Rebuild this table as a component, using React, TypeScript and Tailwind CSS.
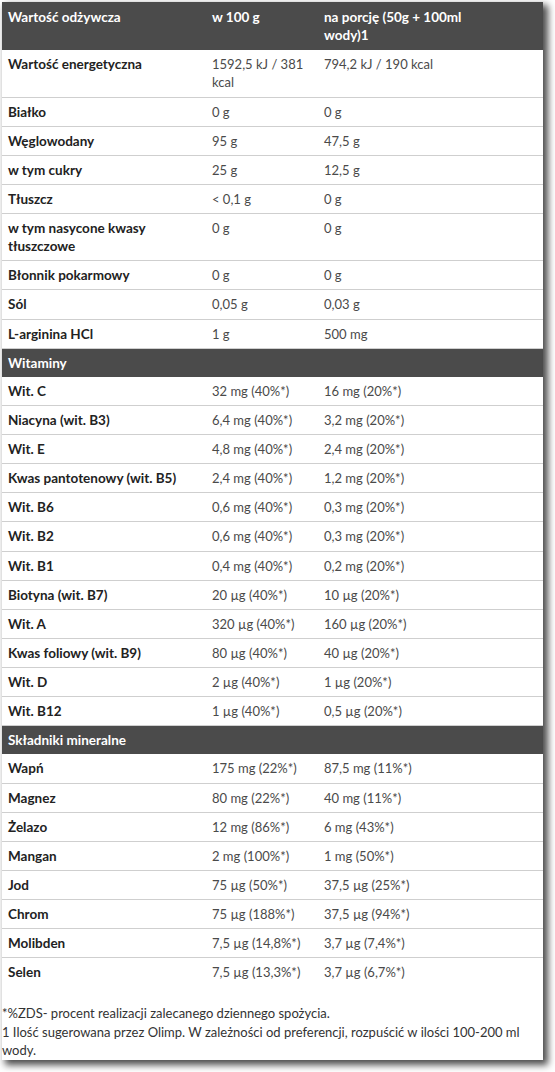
type Row = [string, string, string];

const basic: Row[] = [
  ["Wartość energetyczna", "1592,5 kJ / 381 kcal", "794,2 kJ / 190 kcal"],
  ["Białko", "0 g", "0 g"],
  ["Węglowodany", "95 g", "47,5 g"],
  ["w tym cukry", "25 g", "12,5 g"],
  ["Tłuszcz", "< 0,1 g", "0 g"],
  ["w tym nasycone kwasy tłuszczowe", "0 g", "0 g"],
  ["Błonnik pokarmowy", "0 g", "0 g"],
  ["Sól", "0,05 g", "0,03 g"],
  ["L-arginina HCl", "1 g", "500 mg"],
];

const vitamins: Row[] = [
  ["Wit. C", "32 mg (40%*)", "16 mg (20%*)"],
  ["Niacyna (wit. B3)", "6,4 mg (40%*)", "3,2 mg (20%*)"],
  ["Wit. E", "4,8 mg (40%*)", "2,4 mg (20%*)"],
  ["Kwas pantotenowy (wit. B5)", "2,4 mg (40%*)", "1,2 mg (20%*)"],
  ["Wit. B6", "0,6 mg (40%*)", "0,3 mg (20%*)"],
  ["Wit. B2", "0,6 mg (40%*)", "0,3 mg (20%*)"],
  ["Wit. B1", "0,4 mg (40%*)", "0,2 mg (20%*)"],
  ["Biotyna (wit. B7)", "20 µg (40%*)", "10 µg (20%*)"],
  ["Wit. A", "320 µg (40%*)", "160 µg (20%*)"],
  ["Kwas foliowy (wit. B9)", "80 µg (40%*)", "40 µg (20%*)"],
  ["Wit. D", "2 µg (40%*)", "1 µg (20%*)"],
  ["Wit. B12", "1 µg (40%*)", "0,5 µg (20%*)"],
];

const minerals: Row[] = [
  ["Wapń", "175 mg (22%*)", "87,5 mg (11%*)"],
  ["Magnez", "80 mg (22%*)", "40 mg (11%*)"],
  ["Żelazo", "12 mg (86%*)", "6 mg (43%*)"],
  ["Mangan", "2 mg (100%*)", "1 mg (50%*)"],
  ["Jod", "75 µg (50%*)", "37,5 µg (25%*)"],
  ["Chrom", "75 µg (188%*)", "37,5 µg (94%*)"],
  ["Molibden", "7,5 µg (14,8%*)", "3,7 µg (7,4%*)"],
  ["Selen", "7,5 µg (13,3%*)", "3,7 µg (6,7%*)"],
];

function DataRow({ row, last }: { row: Row; last?: boolean }) {
  return (
    <div className={`flex ${last ? "" : "border-b border-[#cfcfcf]"}`}>
      <div className="w-[204px] shrink-0 px-[6px] py-[5px] text-[13.5px] font-bold text-[#222]">{row[0]}</div>
      <div className="w-[112px] shrink-0 px-[6px] py-[5px] text-[#4a4a4a]">{row[1]}</div>
      <div className="flex-1 px-[6px] py-[5px] text-[#4a4a4a]">{row[2]}</div>
    </div>
  );
}

function SectionRow({ title }: { title: string }) {
  return (
    <div className="bg-[#4b4b4b] px-[6px] py-[5px] text-[13.5px] font-bold text-white">{title}</div>
  );
}

export default function App() {
  return (
    <div className="bg-white min-h-[1072px] pt-[2px] pl-[2px]">
      <div
        className="w-[541px] bg-white text-[13px] leading-[18.13px] shadow-[4px_4px_7px_1px_rgba(0,0,0,0.7)] pb-[1px]"
        style={{ fontFamily: "Lato, 'Noto Sans', sans-serif" }}
      >
        <div className="flex bg-[#4b4b4b] text-[13.5px] font-bold text-white">
          <div className="w-[204px] shrink-0 px-[6px] py-[6px]">Wartość odżywcza</div>
          <div className="w-[112px] shrink-0 px-[6px] py-[6px]">w 100 g</div>
          <div className="flex-1 px-[6px] py-[6px]">
            <div className="max-w-[165px]">na porcję (50g + 100ml wody)1</div>
          </div>
        </div>
        {basic.map((r) => (
          <DataRow key={r[0]} row={r} />
        ))}
        <SectionRow title="Witaminy" />
        {vitamins.map((r) => (
          <DataRow key={r[0]} row={r} />
        ))}
        <SectionRow title="Składniki mineralne" />
        {minerals.map((r, i) => (
          <DataRow key={r[0]} row={r} last={i === minerals.length - 1} />
        ))}
        <p className="mt-[18px] text-[#333]">
          *%ZDS- procent realizacji zalecanego dziennego spożycia.
          <br />1 Ilość sugerowana przez Olimp. W zależności od preferencji, rozpuścić w ilości 100-200 ml wody.
        </p>
      </div>
    </div>
  );
}
